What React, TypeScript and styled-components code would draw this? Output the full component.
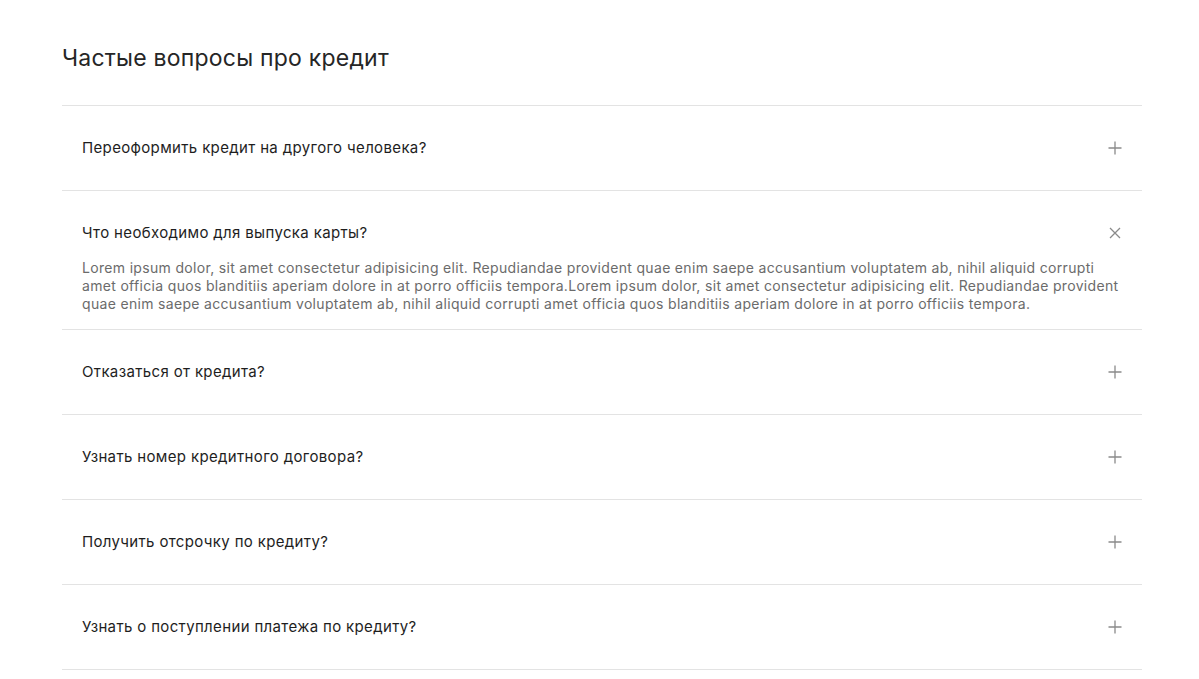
import { useState } from 'react';
import styled, { createGlobalStyle } from 'styled-components';

const GlobalStyle = createGlobalStyle`
  body {
    margin: 0;
    background: #fff;
    font-family: "Inter", "Noto Sans", sans-serif;
  }
`;

const Page = styled.div`
  padding: 44px 57px 40px 62px;
`;

const Title = styled.h2`
  margin: 0 0 33px;
  font-family: "Inter", "Liberation Sans", sans-serif;
  font-size: 23px;
  letter-spacing: 0.22px;
  line-height: 28px;
  font-weight: 400;
  color: #262626;
`;

const List = styled.div`
  border-top: 1px solid #e3e3e3;
`;

const Item = styled.div`
  border-bottom: 1px solid #e3e3e3;
`;

const Header = styled.button<{ $open: boolean }>`
  width: 100%;
  display: flex;
  align-items: center;
  justify-content: space-between;
  padding: 32px 20px ${p => (p.$open ? '16px' : '32px')};
  border: 0;
  background: none;
  cursor: pointer;
  text-align: left;
  font-family: "Inter", "Noto Sans", sans-serif;
  font-size: 15px;
  letter-spacing: 0.35px;
  line-height: 20px;
  color: #1e1e1e;
`;

const Icon = styled.span`
  display: flex;
  color: #8a8a8a;
`;

const Body = styled.div`
  padding: 0 20px 16px;
  font-family: "Inter", "Noto Sans", sans-serif;
  font-size: 14px;
  letter-spacing: 0.32px;
  line-height: 18px;
  color: #6b6b6b;
`;

const questions = [
  'Переоформить кредит на другого человека?',
  'Что необходимо для выпуска карты?',
  'Отказаться от кредита?',
  'Узнать номер кредитного договора?',
  'Получить отсрочку по кредиту?',
  'Узнать о поступлении платежа по кредиту?',
];

const answer =
  'Lorem ipsum dolor, sit amet consectetur adipisicing elit. Repudiandae provident quae enim saepe accusantium voluptatem ab, nihil aliquid corrupti amet officia quos blanditiis aperiam dolore in at porro officiis tempora.Lorem ipsum dolor, sit amet consectetur adipisicing elit. Repudiandae provident quae enim saepe accusantium voluptatem ab, nihil aliquid corrupti amet officia quos blanditiis aperiam dolore in at porro officiis tempora.';

function PlusIcon() {
  return (
    <svg width="14" height="14" viewBox="0 0 14 14" fill="none" stroke="currentColor" strokeWidth="1.3">
      <path d="M7 0.5v13M0.5 7h13" />
    </svg>
  );
}

function CloseIcon() {
  return (
    <svg width="14" height="14" viewBox="0 0 14 14" fill="none" stroke="currentColor" strokeWidth="1.3">
      <path d="M2 2l10 10M12 2L2 12" />
    </svg>
  );
}

export default function App() {
  const [open, setOpen] = useState(1);

  return (
    <>
      <GlobalStyle />
      <Page>
        <Title>Частые вопросы про кредит</Title>
        <List>
          {questions.map((q, i) => (
            <Item key={q}>
              <Header $open={open === i} onClick={() => setOpen(open === i ? -1 : i)}>
                <span>{q}</span>
                <Icon>{open === i ? <CloseIcon /> : <PlusIcon />}</Icon>
              </Header>
              {open === i && <Body>{answer}</Body>}
            </Item>
          ))}
        </List>
      </Page>
    </>
  );
}
